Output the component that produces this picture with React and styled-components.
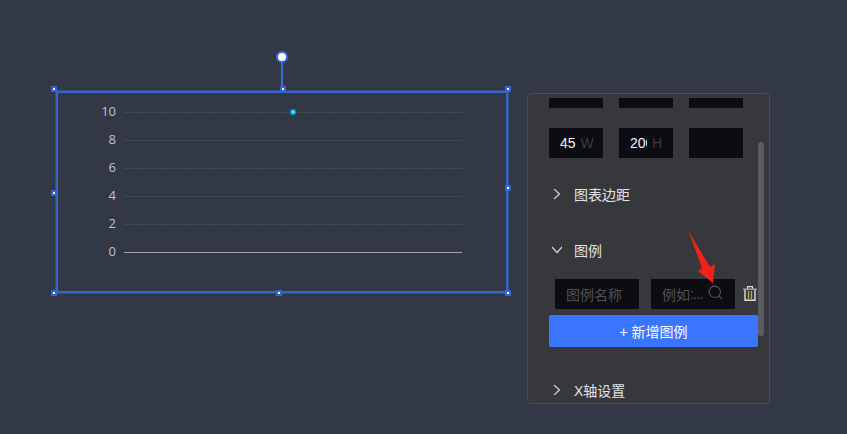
import React from 'react'
import styled, { createGlobalStyle } from 'styled-components'
import { Search } from 'lucide-react'

const GlobalStyle = createGlobalStyle`
  html, body {
    margin: 0;
    padding: 0;
    background: #333847;
    font-family: "Liberation Sans", "Noto Sans CJK SC", sans-serif;
  }
`

const ticks = [
  { label: '10', y: 112 },
  { label: '8', y: 140 },
  { label: '6', y: 168 },
  { label: '4', y: 196 },
  { label: '2', y: 224 },
  { label: '0', y: 252 },
]

const handles = [
  [54, 89], [283, 89], [508, 89],
  [54, 193], [508, 188],
  [54, 293], [279, 293], [508, 293],
]

const Chart = () => (
  <ChartSvg width="847" height="434" viewBox="0 0 847 434">
    {ticks.map(t => (
      <g key={t.label}>
        <line
          x1="124"
          x2="462"
          y1={t.y + 0.5}
          y2={t.y + 0.5}
          stroke={t.label === '0' ? '#a3a5a9' : '#494d5b'}
          strokeDasharray={t.label === '0' ? 'none' : '2 1'}
        />
        <text x="116" y={t.y + 3.5} textAnchor="end" fill="#c0c2c6" fontSize="13" fontFamily="Open Sans, sans-serif">
          {t.label}
        </text>
      </g>
    ))}
    <circle cx="293" cy="112" r="3" fill="#00a9e6" />
    <circle cx="293" cy="112" r="1" fill="#e8fbff" />
  </ChartSvg>
)

const Chevron = ({ open }) => (
  <ChevronBox width="10" height="10" viewBox="0 0 10 10">
    <polyline points={open ? '0,2 5,7.5 10,2' : '2,0 7.5,5 2,10'} fill="none" stroke="currentColor" strokeWidth="1.2" />
  </ChevronBox>
)

const Section = ({ open, children }) => (
  <SectionHead>
    <Chevron open={open} />
    <span>{children}</span>
  </SectionHead>
)

const TrashIcon = () => (
  <TrashSvg width="14" height="15" viewBox="0 0 14 15">
    <path d="M4.5 3V.7h5V3" fill="none" stroke="currentColor" strokeWidth="1.2" />
    <path d="M0 3.2h14" stroke="#a9a28f" strokeWidth="1.6" />
    <path d="M2 4v10.3h10V4" fill="none" stroke="currentColor" strokeWidth="1.4" />
    <path d="M5.5 5v8M8.5 5v8" stroke="#c9a25c" strokeWidth="1.3" />
  </TrashSvg>
)

const App = () => (
  <Page>
    <GlobalStyle />
    <Frame />
    <Chart />
    <RotateStem />
    <RotateKnob />
    {handles.map(([x, y]) => (
      <Handle key={x + '-' + y} $x={x} $y={y} />
    ))}

    <Panel>
      <Scrollbar />
      <Cells $h={10} $top={4}>
        <Cell />
        <Cell />
        <Cell />
      </Cells>
      <Cells $h={30} $top={20}>
        <Cell>
          <Value>45</Value>
          <Unit>W</Unit>
        </Cell>
        <Cell>
          <Value $clip>200</Value>
          <Unit>H</Unit>
        </Cell>
        <Cell />
      </Cells>

      <SectionWrap $top={21}>
        <Section>图表边距</Section>
      </SectionWrap>
      <SectionWrap $top={26}>
        <Section open>图例</Section>
      </SectionWrap>

      <LegendRow>
        <LegendInput>图例名称</LegendInput>
        <LegendInput>
          例如<Dots>:...</Dots>
          <SearchIcon size={17} strokeWidth={1.5} />
        </LegendInput>
        <TrashIcon />
      </LegendRow>
      <AddButton>+ 新增图例</AddButton>

      <SectionWrap $top={28}>
        <Section>X轴设置</Section>
      </SectionWrap>
    </Panel>

    <Arrow width="847" height="434" viewBox="0 0 847 434">
      <polygon points="688,230 710,267 715,264 713,283 698,271 702,268" fill="#f5201a" />
    </Arrow>
  </Page>
)

export default App

const Page = styled.div`
  position: relative;
  width: 847px;
  height: 434px;
  overflow: hidden;
  background: #333847;
`
const Frame = styled.div`
  position: absolute;
  left: 56px;
  top: 91px;
  width: 452px;
  height: 202px;
  box-sizing: border-box;
  border: 2px solid #3564cc;
  box-shadow: 0 0 0 0.5px #3564cc;
`
const ChartSvg = styled.svg`
  position: absolute;
  left: 0;
  top: 0;
`
const RotateStem = styled.div`
  position: absolute;
  left: 281px;
  top: 60px;
  width: 2px;
  height: 28px;
  background: #3a6ad6;
`
const RotateKnob = styled.div`
  position: absolute;
  left: 276px;
  top: 51px;
  width: 12px;
  height: 12px;
  box-sizing: border-box;
  border: 2px solid #3a6ad6;
  border-radius: 50%;
  background: #fff;
`
const Handle = styled.div`
  position: absolute;
  left: ${p => p.$x - 3}px;
  top: ${p => p.$y - 3}px;
  width: 6px;
  height: 6px;
  box-sizing: border-box;
  border: 2px solid #3564cc;
  background: #fff;
`
const Panel = styled.div`
  position: absolute;
  left: 527px;
  top: 93px;
  width: 243px;
  height: 311px;
  box-sizing: border-box;
  overflow: hidden;
  padding-left: 21px;
  background: #37383b;
  border: 1px solid #4b4e54;
  border-radius: 4px;
`
const Scrollbar = styled.div`
  position: absolute;
  left: 230px;
  top: 48px;
  width: 6px;
  height: 194px;
  border-radius: 3px;
  background: #5b5c62;
`
const Cells = styled.div`
  display: flex;
  gap: 16px;
  height: ${p => p.$h}px;
  margin-top: ${p => p.$top}px;
`
const Cell = styled.div`
  display: flex;
  align-items: center;
  width: 54px;
  padding-left: 11px;
  box-sizing: border-box;
  background: #0c0d12;
  font-size: 14px;
  overflow: hidden;
`
const Value = styled.span`
  display: inline-block;
  color: #f2f4f8;
  width: ${p => (p.$clip ? '17px' : 'auto')};
  overflow: hidden;
  margin-right: 5px;
`
const Unit = styled.span`
  color: #3a3b3f;
`
const SectionWrap = styled.div`
  margin-top: ${p => p.$top}px;
`
const SectionHead = styled.div`
  display: flex;
  align-items: center;
  gap: 12px;
  height: 30px;
  margin-left: 3px;
  color: #e2e3e6;
  font-size: 14px;
`
const ChevronBox = styled.svg`
  flex: none;
  color: #d5d6d9;
`
const LegendRow = styled.div`
  display: flex;
  align-items: center;
  gap: 12px;
  height: 30px;
  margin-top: 14px;
  padding-left: 6px;
`
const LegendInput = styled.div`
  position: relative;
  display: flex;
  align-items: center;
  width: 84px;
  height: 30px;
  box-sizing: border-box;
  padding-left: 11px;
  background: #0c0d12;
  color: #505155;
  font-size: 14px;
  white-space: nowrap;
`
const Dots = styled.span`
  letter-spacing: -0.8px;
`
const SearchIcon = styled(Search)`
  position: absolute;
  right: 11px;
  top: 5px;
  color: #55565b;
`
const TrashSvg = styled.svg`
  flex: none;
  margin-left: -4px;
  margin-top: -1px;
  color: #dcdde0;
`
const AddButton = styled.div`
  display: flex;
  align-items: center;
  justify-content: center;
  width: 209px;
  height: 32px;
  margin-top: 6px;
  border-radius: 2px;
  background: #3a75ff;
  color: #fff;
  font-size: 14px;
`
const Arrow = styled.svg`
  position: absolute;
  left: 0;
  top: 0;
  pointer-events: none;
`
